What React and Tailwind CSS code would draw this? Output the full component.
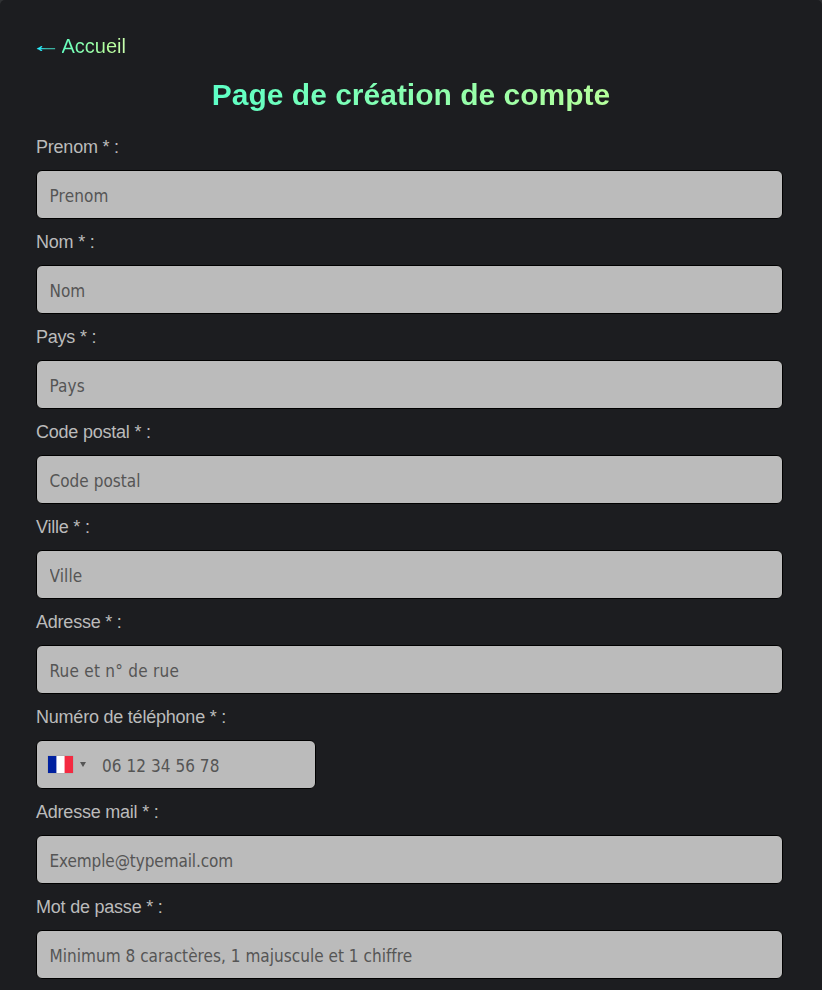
const gradient = "bg-clip-text text-transparent";

const label = "block h-[35px] pt-[1px] text-[18px] leading-[22px] tracking-[-0.22px] text-[#bbbbbb]";
const box =
  "h-[49px] rounded-md border border-black bg-[#bbbbbb] font-['DejaVu_Sans_Condensed','DejaVu_Sans',sans-serif] [font-stretch:condensed] text-[17px] text-[#333] outline-none placeholder:text-[#555] placeholder:opacity-100";

function Field({ name, hint, spacing = "tracking-[0.03px]" }) {
  return (
    <div className="h-[95px]">
      <label className={label}>{name} * :</label>
      <input className={`${box} block w-full px-[12.5px] pt-[2px] ${spacing}`} placeholder={hint} />
    </div>
  );
}

function PhoneField() {
  return (
    <div className="h-[95px]">
      <label className={label}>Numéro de téléphone * :</label>
      <div className={`${box} flex w-[280px] items-center pl-[10.5px]`}>
        <span className="flex h-[17px] w-[25px] shrink-0 shadow-[0_0_1px_#888]">
          <span className="w-[8px] bg-[#00209f]" />
          <span className="w-[1px] bg-[#9aa4d8]" />
          <span className="w-[7px] bg-white" />
          <span className="w-[1px] bg-[#f9a5b0]" />
          <span className="w-[8px] bg-[#f42a41]" />
        </span>
        <svg className="ml-[7.5px] shrink-0" width="6" height="5" viewBox="0 0 6 5">
          <path d="M0 0h6L3 5z" fill="#555" />
        </svg>
        <input
          className="ml-[16px] w-[190px] bg-transparent pt-[4px] tracking-[0.05px] outline-none placeholder:text-[#555] placeholder:opacity-100"
          placeholder="06 12 34 56 78"
        />
      </div>
    </div>
  );
}

export default function App() {
  return (
    <div className="h-[990px] overflow-hidden bg-[#303234] font-['Liberation_Sans',Arial,sans-serif]">
      <main className="h-[1020px] rounded-[5px] bg-[#1c1d20] pr-[39px] pl-[36px] pt-[34px]">
        <a className="flex h-[24px] w-fit text-[20px] leading-[24px]">
          <span className={`${gradient} block w-[20px] origin-center -translate-y-px scale-x-[1.5] bg-[linear-gradient(90deg,#2af0ff_15%,#2af0ff_35%,#40cbbb_50%,#40c0aa_100%)] [-webkit-text-stroke:0.3px_transparent]`}>
            ←
          </span>
          <span className={`${gradient} ml-[5.5px] block bg-[linear-gradient(90deg,#62ffc0_0%,#b4ff9c_72%,#c8ffb0_100%)]`}>
            Accueil
          </span>
        </a>
        <h1 className={`${gradient} mt-[18px] h-[36px] bg-[linear-gradient(90deg,#2af0ff_0%,#60ffc4_25%,#b4ff9c_76%,#d4ffb0_100%)] pl-[3px] text-center text-[30px] leading-[37px] font-bold`}>
          Page de création de compte
        </h1>
        <form className="mt-[23px]">
          <Field name="Prenom" hint="Prenom" spacing="tracking-[0.15px]" />
          <Field name="Nom" hint="Nom" />
          <Field name="Pays" hint="Pays" spacing="tracking-[0.1px]" />
          <Field name="Code postal" hint="Code postal" />
          <Field name="Ville" hint="Ville" spacing="tracking-[0.1px]" />
          <Field name="Adresse" hint="Rue et n° de rue" spacing="tracking-[0.25px]" />
          <PhoneField />
          <Field name="Adresse mail" hint="Exemple@typemail.com" spacing="tracking-[-0.1px]" />
          <Field name="Mot de passe" hint="Minimum 8 caractères, 1 majuscule et 1 chiffre" />
        </form>
      </main>
    </div>
  );
}
